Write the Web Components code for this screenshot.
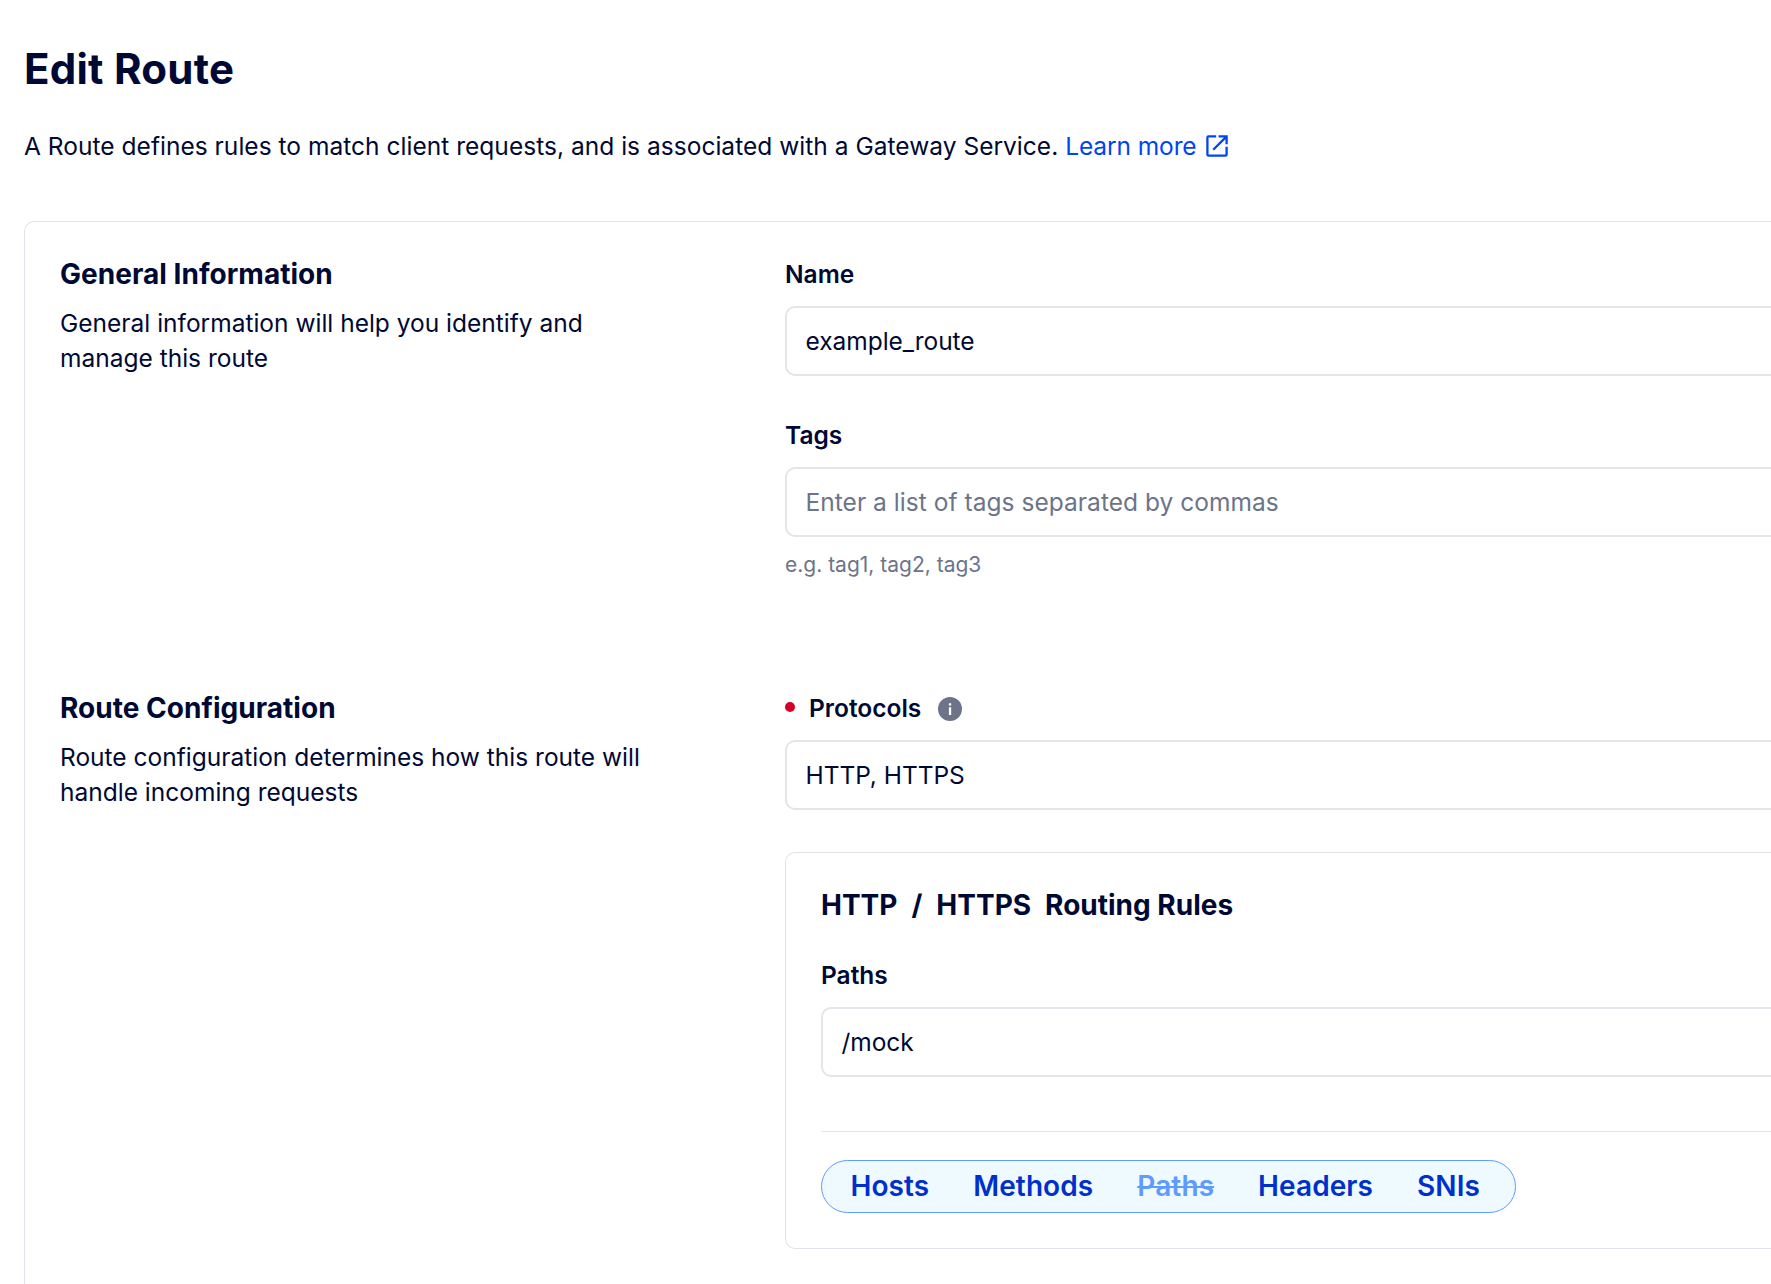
<!DOCTYPE html>
<html lang="en">
<head>
<meta charset="utf-8">
<title>Edit Route</title>
<style>
html,body{margin:0;height:100vh;overflow:hidden;background:#fff}
body{font-family:Inter,"Liberation Sans",sans-serif;font-size:24.5px;line-height:35px;color:#000933}
</style>
</head>
<body>
<route-page></route-page>
<script>
const define=(name,html,init)=>{
  const t=document.createElement('template');t.innerHTML=html;
  customElements.define(name,class extends HTMLElement{
    constructor(){super();this.attachShadow({mode:'open'}).append(t.content.cloneNode(true));}
    connectedCallback(){if(init)init(this,this.shadowRoot);}
  });
};
define('external-icon',`<style>:host{display:block;width:28px;height:28px;white-space:normal}svg{display:block}</style>
<svg width="28" height="28" viewBox="0 0 28 28" fill="none" stroke="#0044f4" stroke-width="2.3"><path d="M13.2 4.4H5.6Q4.4 4.4 4.4 5.6V22.4Q4.4 23.6 5.6 23.6H22.4Q23.6 23.6 23.6 22.4V14.8M15.6 4.4H23.6V12.2M23.4 4.6L10.2 17.8"/></svg>`);
define('info-icon',`<style>:host{display:block;width:24px;height:24px}svg{display:block}</style>
<svg width="24" height="24" viewBox="0 0 24 24"><circle cx="12" cy="12" r="12" fill="#6c7489"/><path fill="#fff" d="M10.9 6.3h2.3v2.2h-2.3zM10.9 10.3h2.3v7.6h-2.3z"/></svg>`);
define('page-header',`<style>:host{display:block;padding:44px 24px 57px}
h1{margin:0 0 35px;font-size:42px;line-height:50px;font-weight:700;letter-spacing:.25px}
.d{display:flex;align-items:center;white-space:pre;letter-spacing:.026px;height:35px}
a{color:#0044f4;display:flex;align-items:center;gap:6px;text-decoration:none;letter-spacing:-.1px}
external-icon{margin-bottom:2px}</style>
<h1><slot name="title"></slot></h1><div class="d"><span><slot></slot> </span><a><slot name="link"></slot><external-icon></external-icon></a></div>`);
define('form-section',`<style>:host{display:grid;grid-template-columns:690px 1fr;gap:35px}
h2{margin:0 0 14px;font-size:28px;line-height:35px;font-weight:700;letter-spacing:.03px}
p{margin:0;width:600px}
.f{display:flex;flex-direction:column;gap:42px}</style>
<div><h2><slot name="title"></slot></h2><p><slot name="text"></slot></p></div><div class="f"><slot></slot></div>`);
define('form-field',`<style>:host{display:block}
label{display:flex;align-items:center;font-weight:600;margin-bottom:14px;height:35px}
i{display:none;width:10px;height:10px;border-radius:50%;background:#d60027;margin:-3px 14px 0 0}
info-icon{display:none;margin:1px 0 0 17px}
:host([required]) i,:host([info]) info-icon{display:block}
.b{box-sizing:border-box;height:70px;border:2px solid #e2e6eb;border-right:0;border-radius:10px 0 0 10px;padding:15.5px 0 15.5px 18.5px;line-height:35px}
.v{letter-spacing:-.04px}
.p{color:#6c7489;letter-spacing:.04px}
small{display:block;font-size:21px;line-height:30px;margin-top:13px;color:#6c7489}</style>
<label><i></i><span class="l"></span><info-icon></info-icon></label><div class="b"><span class="v"></span><span class="p"></span></div>`,
(h,r)=>{const g=a=>h.getAttribute(a);
 r.querySelector('.l').textContent=g('label');
 r.querySelector('.v').textContent=g('value')||'';
 r.querySelector('.p').textContent=g('hint')||'';
 if(g('help')){const s=document.createElement('small');s.textContent=g('help');r.append(s);}});
define('rule-pills',`<style>:host{box-sizing:border-box;display:flex;gap:44px;width:695px;height:53px;padding:0 0 0 28.5px;align-items:center;border:1px solid #5f9aff;border-radius:27px;background:#eefaff;font-size:28px;font-weight:600;color:#0030cc;letter-spacing:.09px}
::slotted([off]){color:#5f9aff;text-decoration:line-through}</style><slot></slot>`);
define('rules-card',`<style>:host{display:block;border:1px solid #e0e4ea;border-right:0;border-radius:10px 0 0 10px;padding:35px 0 35px 35px}
h3{margin:0 0 35px;font-size:28px;line-height:35px;font-weight:700;display:flex;gap:14px;white-space:pre}
hr{border:0;height:1px;background:#e4e4ea;margin:54px 0 28px}</style>
<h3><slot name="title"></slot></h3><slot></slot><hr><slot name="pills"></slot>`);
define('route-page',`<style>:host{display:flex;flex-direction:column;height:100vh}
.card{border:solid #e0e4ea;border-width:1px 0 0 1px;border-radius:10px 0 0 0;margin-left:24px;padding:35px 0 0 35px;display:flex;flex-direction:column;flex:1;box-sizing:border-box}
.one{height:434px}</style>
<page-header><span slot="title">Edit Route</span>A Route defines rules to match client requests, and is associated with a Gateway Service.<span slot="link">Learn more</span></page-header>
<div class="card">
<form-section class="one"><span slot="title">General Information</span><span slot="text">General information will help you identify and<br>manage this route</span>
<form-field label="Name" value="example_route"></form-field>
<form-field label="Tags" hint="Enter a list of tags separated by commas" help="e.g. tag1, tag2, tag3"></form-field></form-section>
<form-section><span slot="title">Route Configuration</span><span slot="text">Route configuration determines how this route will<br>handle incoming requests</span>
<form-field required info label="Protocols" value="HTTP, HTTPS"></form-field>
<rules-card><span slot="title">HTTP</span><span slot="title">/</span><span slot="title">HTTPS</span><span slot="title">Routing Rules</span>
<form-field label="Paths" value="/mock"></form-field>
<rule-pills slot="pills"><span>Hosts</span><span>Methods</span><span off>Paths</span><span>Headers</span><span>SNIs</span></rule-pills></rules-card></form-section>
</div>`);
</script>
</body>
</html>
